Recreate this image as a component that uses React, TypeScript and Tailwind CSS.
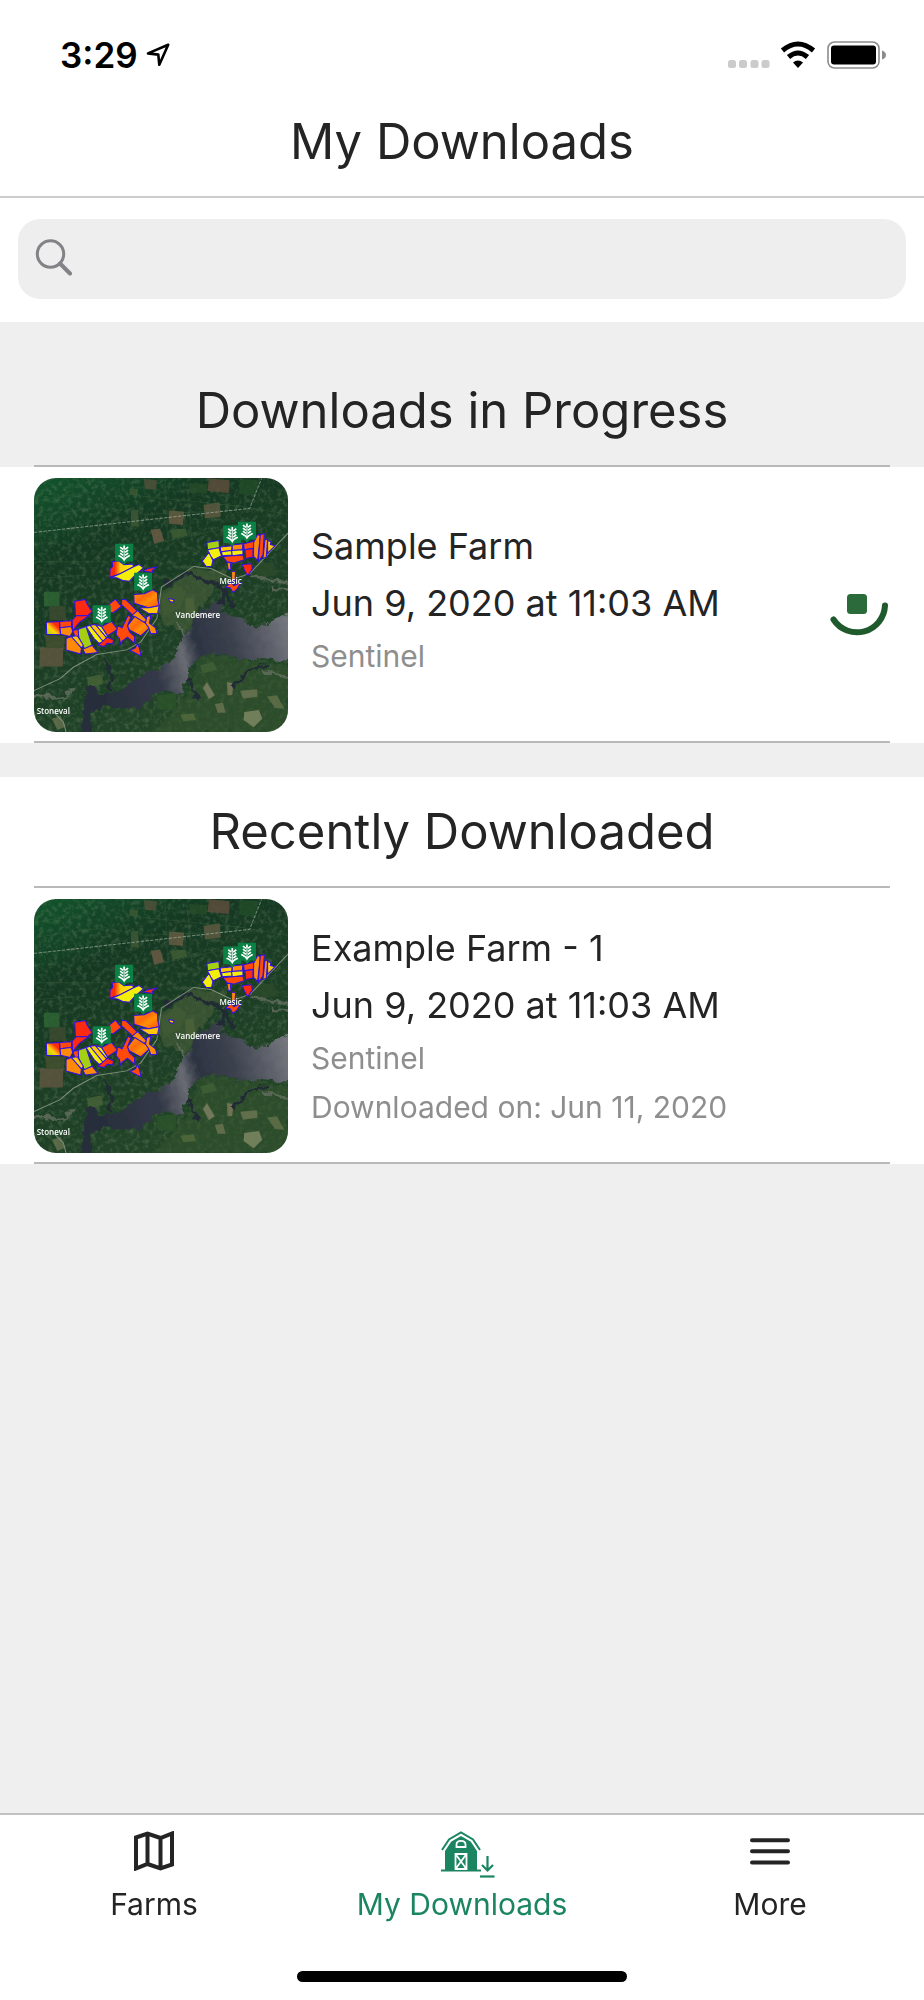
import { useId } from 'react';
import type { ReactNode } from 'react';

type Shape = { points: string; fill: string };

const HOT = '#ff4a0c';
const RED = '#fb2a10';
const AMBER = '#ff8a08';
const GOLD = '#ffc60a';
const YELLOW = '#f4ee0c';
const LIME = '#a5cf12';

const fields: Shape[] = [
  // north
  { points: '276,290 296,287 312,299 336,297 342,304 300,326 269,336 270,312 278,304', fill: 'north' },
  { points: '342,304 356,298 370,308 345,330 328,348 308,346 290,338 272,338 300,326', fill: YELLOW },
  { points: '368,318 384,310 410,306 396,316 400,322 384,320', fill: RED },
  // centre
  { points: '341,388 372,386 398,374 412,382 413,404 417,422 386,428 342,414', fill: 'warm' },
  { points: '358,428 386,428 417,422 412,446 384,444', fill: GOLD },
  { points: '305,402 318,404 352,438 340,452 304,418', fill: HOT },
  { points: '268,416 286,402 304,424 280,442 264,444', fill: HOT },
  { points: '336,450 352,436 380,464 370,474', fill: AMBER },
  { points: '322,482 344,454 392,484 362,512 328,494', fill: 'warm' },
  { points: '380,454 392,450 388,474 406,488 410,504 392,506 386,488 376,474', fill: AMBER },
  { points: '292,482 306,488 324,450 332,456 322,482 328,500 344,514 342,534 322,516 306,528 302,538 298,520 288,508', fill: HOT },
  { points: '352,534 358,550 363,572 330,556 346,548', fill: HOT },
  // west
  { points: '164,408 196,403 200,414 216,440 204,450 166,452', fill: RED },
  { points: '156,466 168,452 206,452 180,470 158,496', fill: RED },
  { points: '79,471 119,469 121,507 80,508', fill: 'edge' },
  { points: '119,469 155,467 154,484 120,488', fill: HOT },
  { points: '120,488 154,484 158,500 150,514 122,507', fill: AMBER },
  { points: '244,484 274,468 292,492 262,512', fill: HOT },
  { points: '174,492 198,484 216,540 194,552 176,516', fill: LIME },
  { points: '198,484 210,480 252,530 236,534 222,520', fill: YELLOW },
  { points: '210,480 226,478 260,518 250,530', fill: GOLD },
  { points: '226,478 244,484 262,512 260,518', fill: YELLOW },
  { points: '158,496 174,492 176,516 166,518', fill: HOT },
  { points: '138,520 154,514 184,548 182,566 138,554', fill: AMBER },
  { points: '154,514 172,512 190,540 184,548', fill: GOLD },
  { points: '188,552 216,540 234,562 196,566', fill: AMBER },
  { points: '234,540 262,516 280,524 278,536 262,534 252,544', fill: RED },
  { points: '446,400 462,404 458,412 448,408', fill: GOLD },
  // east
  { points: '560,232 596,226 598,248 562,254', fill: LIME },
  { points: '562,254 596,248 604,272 580,284 570,272', fill: YELLOW },
  { points: '546,288 566,262 578,286 574,304 558,304', fill: YELLOW },
  { points: '600,246 636,242 634,256 602,260', fill: GOLD },
  { points: '604,260 634,256 636,270 606,272', fill: YELLOW },
  { points: '636,240 668,236 666,254 636,256', fill: AMBER },
  { points: '634,256 668,254 668,268 636,272', fill: YELLOW },
  { points: '608,274 668,270 672,284 640,294 620,290', fill: HOT },
  { points: '670,236 704,228 706,248 672,254', fill: HOT },
  { points: '674,254 698,250 698,276 676,280', fill: RED },
  { points: '700,232 712,208 720,212 712,286 700,274', fill: AMBER },
  { points: '720,208 732,206 728,270 714,290', fill: HOT },
  { points: '734,224 742,222 738,276 728,280', fill: AMBER },
  { points: '742,226 752,230 750,238 764,242 742,264', fill: GOLD },
  { points: '620,292 630,292 632,314 624,314', fill: AMBER },
  { points: '666,298 694,296 696,312 682,332 672,314', fill: RED },
  { points: '634,318 646,320 644,346 634,344', fill: AMBER },
  { points: '616,366 634,350 640,362 662,352 650,372 638,382 630,368', fill: HOT },
];

const plots: Shape[] = [
  { points: '372,42 410,46 408,74 374,72', fill: '#50503a' },
  { points: '566,40 628,46 626,84 562,78', fill: '#5d4d3c' },
  { points: '446,136 492,140 488,180 446,176', fill: '#665c42' },
  { points: '550,120 598,112 602,154 554,160', fill: '#5d5940' },
  { points: '392,194 420,190 432,228 402,236', fill: '#6b5b44' },
  { points: '328,72 354,72 352,90 328,90', fill: '#3c5832' },
  { points: '332,136 354,134 356,184 332,184', fill: '#3d5835' },
  { points: '508,54 562,58 560,86 506,80', fill: '#254b28' },
  { points: '662,42 712,46 706,92 656,86', fill: '#214b28' },
  { points: '450,194 496,190 502,212 458,222', fill: '#3f5e35' },
  { points: '72,380 118,380 118,424 72,424', fill: '#2e6434' },
  { points: '88,424 136,422 136,464 88,466', fill: '#3c4a30' },
  { points: '60,546 130,548 128,604 58,604', fill: '#5f5640' },
  { points: '76,510 134,512 132,548 78,548', fill: '#43502f' },
  { points: '494,400 520,396 526,440 496,446', fill: '#4b6138' },
  { points: '420,400 470,360 500,380 480,430 430,450', fill: '#3f5a34' },
  { points: '700,300 760,290 770,330 710,340', fill: '#2b4a2c' },
  { points: '200,636 244,628 250,656 206,666', fill: '#456137' },
  { points: '408,690 470,682 466,736 412,732', fill: '#2b522c' },
  { points: '560,650 584,690 566,702 548,668', fill: '#7e7f62' },
  { points: '620,650 640,654 636,690 622,690', fill: '#7b7a5b' },
  { points: '540,600 580,590 590,614 548,624', fill: '#3f6035' },
  { points: '660,676 710,672 712,694 668,700', fill: '#6c7653' },
  { points: '672,740 716,734 726,760 700,786 670,764', fill: '#7d8763' },
  { points: '740,694 770,690 792,730 764,728', fill: '#607049' },
  { points: '584,716 608,712 616,742 592,742', fill: '#69724f' },
  { points: '480,748 520,744 528,764 490,768', fill: '#51683c' },
  { points: '96,760 122,752 136,784 112,794', fill: '#63704d' },
];

const pins = [
  [285, 236],
  [342, 323],
  [218, 420],
  [609, 181],
  [653, 170],
];

function CropPin({ x, y }: { x: number; y: number }) {
  return (
    <g transform={`translate(${x} ${y})`}>
      <path d="M0 0H54V53H36L27 63L18 53H0Z" fill="#0b8145" />
      <g fill="none" stroke="#fff" strokeWidth="5">
        <path d="M27 11V47" strokeWidth="3" />
        <path d="M27 5V14M15 10L24 17M39 10L30 17M15 19L24 26M39 19L30 26M15 28L24 35M39 28L30 35" />
        <path d="M10 35C14 38 22 39 27 48C32 39 40 38 44 35" />
      </g>
    </g>
  );
}

function FarmMap() {
  const id = useId();
  const ref = (name: string) => `url(#${id}${name})`;
  const paint = (fill: string) => (fill.startsWith('#') ? fill : ref(fill));

  return (
    <svg
      viewBox="42 39 761 761"
      className="size-[254px] shrink-0 rounded-[22px]"
      role="img"
      aria-label="Satellite map of the farm"
    >
      <defs>
        <linearGradient id={`${id}land`} x1="0" y1="0" x2="0.5" y2="1">
          <stop offset="0" stopColor="#12552d" />
          <stop offset="0.3" stopColor="#143822" />
          <stop offset="1" stopColor="#234528" />
        </linearGradient>
        <linearGradient id={`${id}water`} x1="0" y1="0.4" x2="1" y2="0.2">
          <stop offset="0" stopColor="#262d3b" />
          <stop offset="0.32" stopColor="#343948" />
          <stop offset="0.46" stopColor="#686b72" />
          <stop offset="0.54" stopColor="#2d3442" />
          <stop offset="0.7" stopColor="#3b404d" />
          <stop offset="1" stopColor="#777980" />
        </linearGradient>
        <linearGradient id={`${id}north`}>
          <stop offset="0.2" stopColor="#fa2c10" />
          <stop offset="0.45" stopColor="#ffd20a" />
          <stop offset="1" stopColor="#f5e90c" />
        </linearGradient>
        <linearGradient id={`${id}warm`} x1="0" y1="0" x2="1" y2="1">
          <stop offset="0" stopColor="#ff9d08" />
          <stop offset="0.4" stopColor="#ff6a0a" />
          <stop offset="0.6" stopColor="#ff8f08" />
          <stop offset="1" stopColor="#ff4a0c" />
        </linearGradient>
        <linearGradient id={`${id}edge`} x1="0" y1="1" x2="1" y2="0">
          <stop offset="0.1" stopColor="#b2d411" />
          <stop offset="0.4" stopColor="#ffd20a" />
          <stop offset="0.7" stopColor="#fb2a10" />
        </linearGradient>
        <filter id={`${id}shore`} x="-5%" y="-5%" width="110%" height="110%">
          <feTurbulence type="fractalNoise" baseFrequency="0.04" numOctaves="3" seed="4" />
          <feDisplacementMap in="SourceGraphic" scale="30" xChannelSelector="R" yChannelSelector="G" />
          <feGaussianBlur stdDeviation="2" />
        </filter>
        <filter id={`${id}grain`} x="0" y="0" width="100%" height="100%">
          <feTurbulence type="fractalNoise" baseFrequency="0.07" numOctaves="4" seed="9" />
          <feColorMatrix values="0 0 0 0 0.42  0 0 0 0 0.48  0 0 0 0 0.28  2.6 0 0 0 -1.15" />
        </filter>
      </defs>

      <rect x="42" y="39" width="761" height="761" fill={ref('land')} />
      <rect x="42" y="39" width="761" height="761" filter={ref('grain')} opacity="0.22" />

      <g filter={ref('shore')}>
        <path d="M400 400L520 310L620 320L560 400L530 460L500 500L430 480Z" fill="#435b36" opacity="0.7" />
        <path d="M540 560L640 580L803 600V800H400L500 690Z" fill="#31512e" opacity="0.6" />
      </g>

      {plots.map((plot) => (
        <polygon key={plot.points} points={plot.points} fill={plot.fill} opacity="0.85" />
      ))}

      <g fill="none" stroke="#456946" strokeWidth="2" opacity="0.5">
        <path d="M50 40L262 232M170 40L270 186M42 154L260 124M42 110L170 86M340 90L372 184L352 232M434 44L444 248M500 44L514 228M350 92L660 124M370 148L640 136M280 190L360 300M588 80L700 240M640 120L803 148M370 244L640 184M42 290H270M50 340L200 330M136 290V460" />
      </g>

      <g filter={ref('shore')}>
        <path
          d="M572 420L610 404L600 440L650 460L700 482L760 470L815 440V590L730 582L650 580L600 562L550 572L510 600L494 660L490 682L440 678L400 690L350 730L300 732L240 720L210 750L214 815H184L196 730L190 690L206 660L250 686L300 680L340 640L400 614L450 590L496 510L520 464Z"
          fill={ref('water')}
        />
        <path
          d="M600 420L612 376L590 352L550 346L500 326M612 380L640 430M500 640L530 700M272 680L268 600L250 580M640 664L680 620L740 600M430 360L500 320"
          fill="none"
          stroke="#202a35"
          strokeWidth="9"
        />
        <path
          d="M815 350L740 344L690 334M815 374L760 370M815 640L730 618M42 690L120 700L160 670M470 478L500 510"
          fill="none"
          stroke="#6d7468"
          strokeWidth="9"
          opacity="0.7"
        />
      </g>

      <path d="M42 202L688 130L724 40" fill="none" stroke="#a9b5a9" strokeWidth="2" strokeDasharray="10 4" />
      <path
        d="M42 676L120 640L160 606L230 568L320 554L362 530L410 460L424 366L520 304L572 310L640 342L690 324L750 260L803 204M100 740L130 770L138 800"
        fill="none"
        stroke="#7f8f7c"
        strokeWidth="3"
      />

      <g stroke="#2f12e6" strokeWidth="3" strokeLinejoin="round">
        {fields.map((field) => (
          <polygon key={field.points} points={field.points} fill={paint(field.fill)} />
        ))}
      </g>

      <g className="font-['Open_Sans',sans-serif] font-semibold" fill="#fff" fontSize="24">
        <text x="598" y="356">Mesic</text>
        <text x="466" y="457">Vandemere</text>
        <text x="50" y="747">Stoneval</text>
      </g>

      {pins.map(([x, y]) => (
        <CropPin key={`${x}-${y}`} x={x} y={y} />
      ))}
    </svg>
  );
}

function StatusBar() {
  return (
    <div className="flex h-[88px] items-center justify-between pt-[22px] pr-[38px] pl-[60px] text-black">
      <div className="flex items-center gap-2">
        <span className="text-[35px] leading-10 font-semibold">3:29</span>
        <svg viewBox="0 0 24 24" className="size-6" aria-hidden="true">
          <path d="M22.2 1.7L2 10.4L12.3 11.6L13.3 21.8Z" fill="none" stroke="currentColor" strokeWidth="2.6" strokeLinejoin="round" />
        </svg>
      </div>

      <svg viewBox="0 0 158 28" className="h-7 w-[158px]" aria-hidden="true">
        <g fill="#cbcbcb">
          <rect x="0" y="19" width="8" height="8" rx="2.5" />
          <rect x="11" y="19" width="8" height="8" rx="2.5" />
          <rect x="22.5" y="19" width="8" height="8" rx="2.5" />
          <rect x="33.5" y="19" width="8" height="8" rx="2.5" />
        </g>
        <g fill="none" stroke="#000" strokeWidth="5">
          <path d="M54.5 9.5Q70 -3.5 85.5 9.5" />
          <path d="M60.5 16Q70 8 79.5 16" />
        </g>
        <path d="M65 21.5Q70 17.5 75 21.5L70 27Z" />
        <rect x="100" y="1" width="51" height="26" rx="6.5" fill="none" stroke="#8c8c8c" strokeWidth="1.6" />
        <rect x="103" y="4.5" width="45" height="19" rx="3" />
        <path d="M154 9.5Q158 11 158 14T154 18.5Z" fill="#8c8c8c" />
      </svg>
    </div>
  );
}

function SearchBar() {
  return (
    <div className="bg-white px-[18px] pt-[21px] pb-[23px]">
      <label className="flex h-20 items-center gap-4 rounded-[22px] bg-[#eeeeee] px-[17px]">
        <svg viewBox="0 0 38 38" className="mb-1 size-[38px] shrink-0 text-[#838387]" aria-hidden="true">
          <circle cx="15.5" cy="16" r="13.2" fill="none" stroke="currentColor" strokeWidth="3" />
          <path d="M25 25.5L35 35.5" stroke="currentColor" strokeWidth="4" strokeLinecap="round" />
        </svg>
        <input
          type="search"
          aria-label="Search downloads"
          className="min-w-0 flex-1 bg-transparent text-[36px] outline-none"
        />
      </label>
    </div>
  );
}

function Spinner() {
  return (
    <svg viewBox="0 0 60 60" className="mt-5 mr-0.5 size-[60px] shrink-0" role="img" aria-label="Downloading">
      <path d="M5.5 34.5A28 28 0 0 0 57 20.5" fill="none" stroke="#1f5a2c" strokeWidth="6" strokeLinecap="round" />
      <rect x="19" y="9" width="20" height="20" rx="3.5" fill="#2b6a3b" />
    </svg>
  );
}

function SectionTitle({ children }: { children: ReactNode }) {
  return (
    <h2 className="mx-[34px] border-b-2 border-[#b9b9b9] text-center text-[49px] leading-[109px]">{children}</h2>
  );
}

type DownloadRowProps = {
  name: string;
  date: string;
  details: string[];
  loading?: boolean;
};

function DownloadRow({ name, date, details, loading }: DownloadRowProps) {
  return (
    <article className="bg-white px-[34px]">
      <div className="flex items-center gap-[23px] border-b-2 border-[#b9b9b9] pt-[11px] pb-[9px]">
        <FarmMap />
        <div className={`min-w-0 flex-1 ${loading ? 'pb-3' : ''}`}>
          <h3 className="text-[36px] leading-[57px]">{name}</h3>
          <p className="text-[36px] leading-[57px]">{date}</p>
          {details.map((detail) => (
            <p key={detail} className="text-[30px] leading-[49px] text-[#8e8e8e]">
              {detail}
            </p>
          ))}
        </div>
        {loading && <Spinner />}
      </div>
    </article>
  );
}

function MapIcon() {
  return (
    <svg viewBox="0 0 40 40" className="h-10 w-10" aria-hidden="true">
      <path
        d="M2 6.5L13.5 2.5L26.5 7L38 2.5V33.5L26.5 37.5L13.5 33L2 37.5ZM13.5 2.5V33M26.5 7V37.5"
        fill="none"
        stroke="currentColor"
        strokeWidth="4"
      />
    </svg>
  );
}

function BarnIcon() {
  return (
    <svg viewBox="0 0 54 48" className="-mb-2 ml-3 h-12 w-[54px]" aria-hidden="true">
      <path d="M4 19L10 10L20 4L30 10L36 19V39H4Z" fill="currentColor" />
      <path d="M0 39.5H40" stroke="currentColor" strokeWidth="2" />
      <path d="M2.5 20.5L9.5 10L20 4L30.500 10L37.5 20.5" fill="none" stroke="#fff" strokeWidth="2" />
      <path d="M1 19L8 8.5L20 1.5L32 8.5L39 19" fill="none" stroke="currentColor" strokeWidth="2" />
      <path d="M15.5 16V13.5Q15.5 9.8 20 9.8T24.5 13.5V16Z" fill="none" stroke="#fff" strokeWidth="1.8" />
      <path d="M14.5 23H25.5V38H14.5ZM14.5 23L25.5 38M25.5 23L14.5 38" fill="none" stroke="#fff" strokeWidth="1.8" />
      <path d="M46.5 25V38M41 34L46.5 39.5L52 34" fill="none" stroke="currentColor" strokeWidth="2.2" />
      <path d="M39 45.5H53.5" stroke="currentColor" strokeWidth="2.2" />
    </svg>
  );
}

function MenuIcon() {
  return (
    <svg viewBox="0 0 40 40" className="h-10 w-10" aria-hidden="true">
      <path d="M2 9.2H38M2 20.3H38M2 31.5H38" stroke="currentColor" strokeWidth="4" strokeLinecap="round" />
    </svg>
  );
}

const tabs = [
  { label: 'Farms', icon: <MapIcon />, active: false },
  { label: 'My Downloads', icon: <BarnIcon />, active: true },
  { label: 'More', icon: <MenuIcon />, active: false },
];

function TabBar() {
  return (
    <footer className="mt-auto border-t-2 border-[#c2c2c2] bg-white pt-4 pb-[18px]">
      <nav className="grid grid-cols-3">
        {tabs.map((tab) => (
          <a
            key={tab.label}
            href="#"
            aria-current={tab.active ? 'page' : undefined}
            className={`flex flex-col items-center gap-[11px] text-[30px] leading-[44px] ${tab.active ? 'text-[#1a8560]' : 'text-[#242424]'}`}
          >
            {tab.icon}
            {tab.label}
          </a>
        ))}
      </nav>
      <div className="mx-auto mt-[45px] h-[11px] w-[330px] rounded-full bg-black" />
    </footer>
  );
}

export default function App() {
  return (
    <div className="flex min-h-screen flex-col bg-[#efefef] font-[Inter,'Liberation_Sans',sans-serif] text-[#242424]">
      <header className="border-b-2 border-[#cccccc] bg-white">
        <StatusBar />
        <h1 className="text-center text-[49px] leading-[108px]">My Downloads</h1>
      </header>

      <main>
        <SearchBar />

        <section className="mt-[34px]">
          <SectionTitle>Downloads in Progress</SectionTitle>
          <DownloadRow name="Sample Farm" date="Jun 9, 2020 at 11:03 AM" details={['Sentinel']} loading />
        </section>

        <section className="mt-[34px] bg-white">
          <SectionTitle>Recently Downloaded</SectionTitle>
          <DownloadRow
            name="Example Farm - 1"
            date="Jun 9, 2020 at 11:03 AM"
            details={['Sentinel', 'Downloaded on: Jun 11, 2020']}
          />
        </section>
      </main>

      <TabBar />
    </div>
  );
}
